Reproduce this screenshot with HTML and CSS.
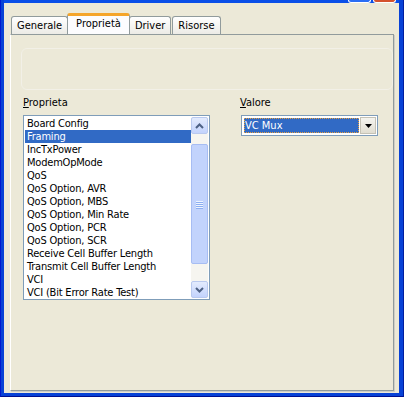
FILE: index.html
```html
<!DOCTYPE html>
<html lang="it">
<head>
    <meta charset="UTF-8">
    <title>Proprietà</title>
    <link rel="stylesheet" href="styles.css">
</head>
<body>
    <div class="window">
        <div class="titlebar">
            <span class="cap cap-max"></span>
            <span class="cap cap-close"></span>
        </div>
        <div class="client">
            <div class="tabs">
                <div class="tab">Generale</div>
                <div class="tab active">Proprietà</div>
                <div class="tab">Driver</div>
                <div class="tab">Risorse</div>
            </div>
            <div class="panel">
                <div class="ghost"></div>
                <div class="fields">
                    <div class="field">
                        <label class="lbl"><u>P</u>roprieta</label>
                        <div class="listbox">
                            <ul class="items">
                                <li>Board Config</li>
                                <li class="sel">Framing</li>
                                <li>IncTxPower</li>
                                <li>ModemOpMode</li>
                                <li>QoS</li>
                                <li>QoS Option, AVR</li>
                                <li>QoS Option, MBS</li>
                                <li>QoS Option, Min Rate</li>
                                <li>QoS Option, PCR</li>
                                <li>QoS Option, SCR</li>
                                <li>Receive Cell Buffer Length</li>
                                <li>Transmit Cell Buffer Length</li>
                                <li>VCI</li>
                                <li>VCI (Bit Error Rate Test)</li>
                            </ul>
                            <div class="vscroll">
                                <div class="sbtn">
                                    <svg width="9" height="6" viewBox="0 0 9 6"><path d="M1 5 L4.5 1.5 L8 5" fill="none" stroke="#4d6185" stroke-width="2"/></svg>
                                </div>
                                <div class="track">
                                    <div class="thumb">
                                        <span class="grip"></span>
                                        <span class="grip"></span>
                                        <span class="grip"></span>
                                        <span class="grip"></span>
                                    </div>
                                </div>
                                <div class="sbtn">
                                    <svg width="9" height="6" viewBox="0 0 9 6"><path d="M1 1 L4.5 4.5 L8 1" fill="none" stroke="#4d6185" stroke-width="2"/></svg>
                                </div>
                            </div>
                        </div>
                    </div>
                    <div class="field field-value">
                        <label class="lbl"><u>V</u>alore</label>
                        <div class="combo">
                            <div class="combo-text"><span>VC Mux</span></div>
                            <div class="combo-btn">
                                <svg width="7" height="4" viewBox="0 0 7 4"><path d="M0 0 H7 L3.5 4 Z" fill="#000"/></svg>
                            </div>
                        </div>
                    </div>
                </div>
            </div>
        </div>
    </div>
</body>
</html>
```

FILE: styles.css
```css
body {
    margin: 0;
    background: #0a246a;
    font-family: "DejaVu Sans Condensed", "DejaVu Sans", sans-serif;
    font-size: 11px;
    color: #000;
}

.window {
    width: 404px;
    height: 397px;
    box-sizing: border-box;
    background: #0842d6;
    border-left: 1px solid #0019cf;
    border-right: 1px solid #001ea0;
    border-bottom: 1px solid #001090;
    padding: 0 4px 3px 3px;
    display: flex;
    flex-direction: column;
}

.titlebar {
    height: 3px;
    background: #0a4fe8;
    display: flex;
    justify-content: flex-end;
    gap: 2px;
    padding-right: 3px;
}

.cap {
    width: 21px;
    height: 2px;
    border: 1px solid #fff;
    border-top: none;
    border-radius: 0 0 3px 3px;
    background: #2a6df4;
}

.cap-close {
    background: #d4512d;
}

.client {
    flex: 1;
    background: #ece9d8;
    padding: 11px 5px 2px 6px;
    display: flex;
    flex-direction: column;
}

.tabs {
    display: flex;
    align-items: flex-end;
    height: 20px;
    padding-left: 1px;
}

.tab {
    height: 18px;
    line-height: 17px;
    padding: 0 5px;
    box-sizing: border-box;
    border: 1px solid #919b9c;
    border-bottom: none;
    border-radius: 3px 3px 0 0;
    background: linear-gradient(#ffffff, #ecebe6);
    margin-right: 1px;
}

.tab.active {
    height: 21px;
    margin: 0 -1px 0 -2px;
    padding: 0 8px;
    background: #fcfcfe;
    border-top: 3px solid #f5a52a;
    line-height: 16px;
    position: relative;
    z-index: 1;
}

.panel {
    flex: 1;
    position: relative;
    border: 1px solid #919b9c;
    border-left-color: #ffffff;
    box-shadow: 1px 1px 0 #d0cfc6;
    background: #ece9d8;
    padding: 0 12px;
}

.ghost {
    position: absolute;
    left: 10px;
    top: 13px;
    width: 370px;
    height: 40px;
    border: 1px solid #f2f0e7;
    border-radius: 6px;
}

.fields {
    display: flex;
    padding-top: 61px;
}

.field {
    display: flex;
    flex-direction: column;
}

.field-value {
    margin-left: 30px;
}

.lbl {
    height: 13px;
    line-height: 13px;
    margin-bottom: 6px;
}

.listbox {
    width: 187px;
    height: 185px;
    box-sizing: border-box;
    border: 1px solid #7f9db9;
    background: #fff;
    display: flex;
    padding: 1px;
}

.items {
    flex: 1;
    list-style: none;
    margin: 0;
    padding: 0;
    overflow: hidden;
}

.items li {
    height: 13px;
    line-height: 13px;
    padding-left: 2px;
    white-space: nowrap;
    letter-spacing: -0.2px;
}

.items li.sel {
    background: #316ac5;
    color: #fff;
}

.vscroll {
    width: 17px;
    display: flex;
    flex-direction: column;
    background: #fbfbf8;
}

.sbtn {
    height: 17px;
    box-sizing: border-box;
    border: 1px solid #b9c9ef;
    border-radius: 2px;
    background: linear-gradient(#e3ebfd, #c3d3fd);
    display: flex;
    align-items: center;
    justify-content: center;
}

.track {
    flex: 1;
    display: flex;
    flex-direction: column;
    padding: 10px 0 17px 0;
    background: #f6f5f0;
}

.thumb {
    flex: 1;
    box-sizing: border-box;
    border: 1px solid #a7bdf3;
    border-radius: 2px;
    background: #c2d3fc;
    display: flex;
    flex-direction: column;
    align-items: center;
    justify-content: center;
    gap: 1px;
}

.grip {
    width: 7px;
    height: 1px;
    background: #eef4fe;
    box-shadow: 0 1px 0 #8caef2;
}

.combo {
    width: 137px;
    height: 21px;
    box-sizing: border-box;
    border: 1px solid #7f9db9;
    background: #fff;
    display: flex;
    padding: 2px;
    margin-left: 1px;
}

.combo-text {
    flex: 1;
    background: #316ac5;
    color: #fff;
    outline: 1px dotted #e8a040;
    outline-offset: -1px;
    line-height: 15px;
    padding-left: 1px;
}

.combo-btn {
    width: 16px;
    box-sizing: border-box;
    margin: -1px -1px -1px 1px;
    border: 1px solid #c5c2b5;
    background: linear-gradient(#f5f4ef, #e1ded1);
    display: flex;
    align-items: center;
    justify-content: center;
}
```
